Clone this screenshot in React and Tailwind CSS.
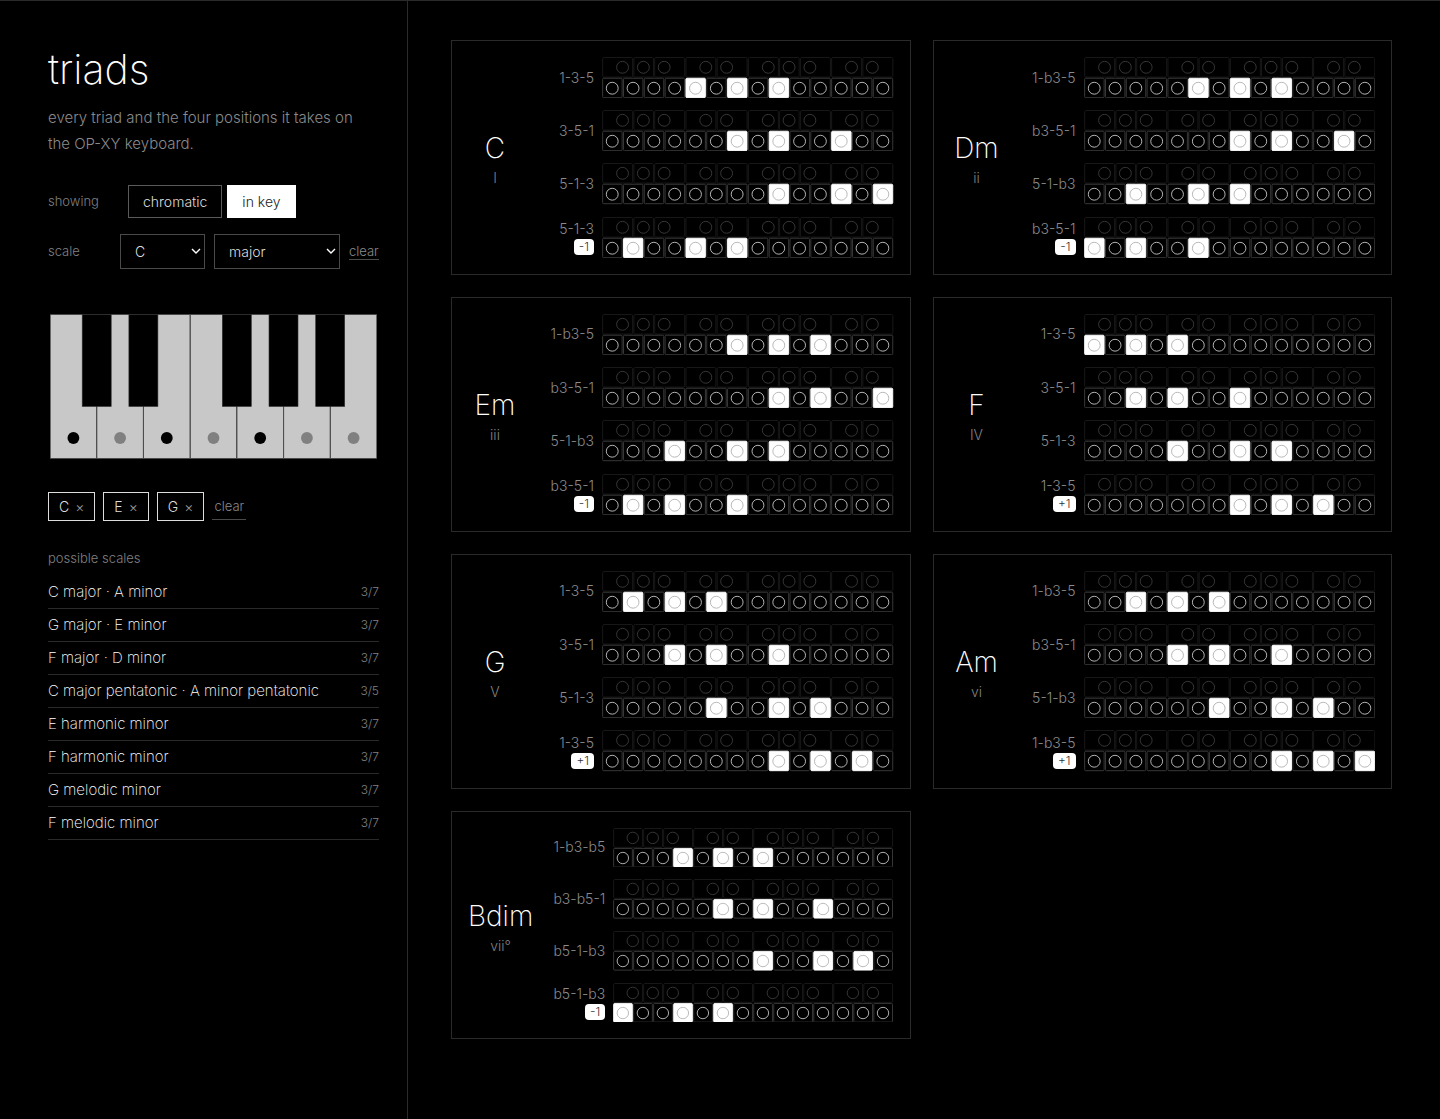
import React, { useState } from "react";

const CHORDS = [
  { name: "C", numeral: "I", rows: [["1-3-5", [4, 6, 8]], ["3-5-1", [6, 8, 11]], ["5-1-3", [8, 11, 13]], ["5-1-3", [1, 4, 6], "-1"]] },
  { name: "Dm", numeral: "ii", rows: [["1-b3-5", [5, 7, 9]], ["b3-5-1", [7, 9, 12]], ["5-1-b3", [2, 5, 7]], ["b3-5-1", [0, 2, 5], "-1"]] },
  { name: "Em", numeral: "iii", rows: [["1-b3-5", [6, 8, 10]], ["b3-5-1", [8, 10, 13]], ["5-1-b3", [3, 6, 8]], ["b3-5-1", [1, 3, 6], "-1"]] },
  { name: "F", numeral: "IV", rows: [["1-3-5", [0, 2, 4]], ["3-5-1", [2, 4, 7]], ["5-1-3", [4, 7, 9]], ["1-3-5", [7, 9, 11], "+1"]] },
  { name: "G", numeral: "V", rows: [["1-3-5", [1, 3, 5]], ["3-5-1", [3, 5, 8]], ["5-1-3", [5, 8, 10]], ["1-3-5", [8, 10, 12], "+1"]] },
  { name: "Am", numeral: "vi", rows: [["1-b3-5", [2, 4, 6]], ["b3-5-1", [4, 6, 9]], ["5-1-b3", [6, 9, 11]], ["1-b3-5", [9, 11, 13], "+1"]] },
  { name: "Bdim", numeral: "vii°", rows: [["1-b3-b5", [3, 5, 7]], ["b3-b5-1", [5, 7, 10]], ["b5-1-b3", [7, 10, 12]], ["b5-1-b3", [0, 3, 5], "-1"]] },
];

const SCALES = [
  ["C major · A minor", "3/7"],
  ["G major · E minor", "3/7"],
  ["F major · D minor", "3/7"],
  ["C major pentatonic · A minor pentatonic", "3/5"],
  ["E harmonic minor", "3/7"],
  ["F harmonic minor", "3/7"],
  ["G melodic minor", "3/7"],
  ["F melodic minor", "3/7"],
];

// Upper keys: left edge, right edge and circle centre, in white-key widths
const UPPER = [
  [0, 1.5, 1], [1.5, 2.5, 2], [2.5, 4, 3],
  [4, 5.5, 5], [5.5, 7, 6],
  [7, 8.5, 8], [8.5, 9.5, 9], [9.5, 11, 10],
  [11, 12.5, 12], [12.5, 14, 13],
];

function Keyboard({ active }) {
  return (
    <svg viewBox="0 0 280 39.6" className="block w-full" aria-hidden="true">
      {UPPER.map(([a, b, c]) => (
        <g key={c} fill="none">
          <rect x={a * 20 + 0.6} y="0.5" width={(b - a) * 20 - 1.2} height="18.8" rx="1.2" stroke="#1a1a1a" strokeWidth="0.9" />
          <circle cx={c * 20 - 0.3} cy="9.9" r="5.7" stroke="#3a3a3a" strokeWidth="0.9" />
        </g>
      ))}
      {Array.from({ length: 14 }, (_, i) => {
        const on = active.includes(i);
        return (
          <g key={i}>
            <rect x={i * 20 + 0.6} y="20.4" width="18.7" height="18.7" rx="1" fill={on ? "#fff" : "#000"} stroke={on ? "#fff" : "#3c3c3c"} strokeWidth="0.9" />
            <circle cx={i * 20 + 9.8} cy="30" r="5.7" fill="none" stroke={on ? "#b4b4b4" : "#c0c0c0"} strokeWidth="0.9" />
          </g>
        );
      })}
    </svg>
  );
}

function ChordCard({ chord }) {
  return (
    <article className="flex items-center gap-5 border border-[#2a2a2a] p-4">
      <div className="min-w-[54px] pt-1 text-center">
        <h2 className="text-[28px] leading-9 font-extralight text-white">{chord.name}</h2>
        <p className="mt-0.5 text-sm leading-5 text-[#808080]">{chord.numeral}</p>
      </div>
      <div className="flex min-w-0 flex-1 flex-col gap-3">
        {chord.rows.map(([label, active, shift], i) => (
          <div key={i} className="flex items-center gap-2">
            <div className="flex w-[52px] shrink-0 flex-col items-end text-sm leading-5 whitespace-nowrap text-[#8a8a8a]">
              <span>{label}</span>
              {shift && <span className="rounded bg-white px-[5px] text-xs leading-4 text-[#333]">{shift}</span>}
            </div>
            <div className="min-w-0 flex-1">
              <Keyboard active={active} />
            </div>
          </div>
        ))}
      </div>
    </article>
  );
}

const BLACK_AT = [1, 2, 4, 5, 6];
const CHOSEN = [0, 2, 4];

function Piano() {
  return (
    <svg viewBox="0 0 327 145" className="block w-full" role="img" aria-label="piano octave">
      {Array.from({ length: 7 }, (_, i) => (
        <g key={i}>
          <rect x={i * 46.7 + 0.2} y="0.5" width="46.4" height="144" fill="#c8c8c8" stroke="#444" strokeWidth="0.8" />
          <circle cx={i * 46.7 + 23.4} cy="124" r="5.9" fill={CHOSEN.includes(i) ? "#000" : "#808080"} />
        </g>
      ))}
      {BLACK_AT.map((n) => (
        <rect key={n} x={n * 46.7 - 14.5} y="0.5" width="29" height="92" fill="#000" stroke="#333" strokeWidth="0.6" />
      ))}
    </svg>
  );
}

function Select({ label, options, value, onChange, className }) {
  return (
    <div className={"relative " + className}>
      <select
        aria-label={label}
        value={value}
        onChange={(e) => onChange(e.target.value)}
        className="h-[35px] w-full appearance-none border border-[#4a4a4a] bg-black pr-6 pl-3.5 text-sm font-light text-[#ddd]"
      >
        {options.map((o) => <option key={o}>{o}</option>)}
      </select>
      <svg viewBox="0 0 10 6" className="pointer-events-none absolute top-3.5 right-1 h-1.5 w-2.5" aria-hidden="true">
        <path d="M1 1 L5 5 L9 1" fill="none" stroke="#fff" strokeWidth="1.4" />
      </svg>
    </div>
  );
}

export default function App() {
  const [root, setRoot] = useState("C");
  const [mode, setMode] = useState("major");
  return (
    <div className="flex min-h-screen border-t border-[#2a2a2a] bg-black font-['Inter',sans-serif] font-light text-[#ddd]">
      <aside className="w-[408px] shrink-0 border-r border-[#2a2a2a] pt-10 pr-7 pl-12">
        <h1 className="text-[41px] leading-[56px] font-extralight text-white">triads</h1>
        <p className="mt-2 text-[15px] leading-[26px] text-[#8a8a8a]">every triad and the four positions it takes on the OP-XY keyboard.</p>

        <div className="mt-7 flex items-center">
          <span className="w-20 text-[13px] text-[#808080]">showing</span>
          <div className="flex gap-[5px]">
            <button className="h-[33px] border border-[#5a5a5a] px-3.5 text-sm text-[#ddd]">chromatic</button>
            <button className="h-[33px] border border-white bg-white px-3.5 text-sm text-[#222]">in key</button>
          </div>
        </div>

        <div className="mt-4 flex items-center">
          <span className="w-[72px] text-[13px] text-[#808080]">scale</span>
          <Select label="scale root" options={["C", "D", "E", "F", "G", "A", "B"]} value={root} onChange={setRoot} className="w-[85px]" />
          <Select label="scale type" options={["major", "minor"]} value={mode} onChange={setMode} className="ml-[9px] w-[126px]" />
          <button className="ml-[9px] border-b border-[#4a4a4a] text-[13px] leading-4 text-[#8a8a8a]">clear</button>
        </div>

        <div className="mt-[45px] px-0.5">
          <Piano />
        </div>

        <div className="mt-[33px] flex items-center gap-2">
          {["C", "E", "G"].map((n) => (
            <button key={n} className="flex h-[29px] items-center gap-1.5 border border-[#ddd] px-2.5 text-sm text-[#ddd]">
              {n}
              <span className="text-[#999]">×</span>
            </button>
          ))}
          <button className="h-[27px] border-b border-[#4a4a4a] px-0.5 pt-0.5 text-[13px] text-[#8a8a8a]">clear</button>
        </div>

        <h2 className="mt-[27px] text-[13px] leading-5 text-[#808080]">possible scales</h2>
        <ul className="mt-2">
          {SCALES.map(([name, hits]) => (
            <li key={name} className="flex h-[33px] items-center justify-between border-b border-[#2a2a2a]">
              <span className="text-[15px] font-extralight text-white">{name}</span>
              <span className="text-xs text-[#808080]">{hits}</span>
            </li>
          ))}
        </ul>
      </aside>

      <main className="grid flex-1 grid-cols-2 content-start items-start gap-[22px] pt-[39px] pr-12 pb-12 pl-[43px]">
        {CHORDS.map((c) => <ChordCard key={c.name} chord={c} />)}
      </main>
    </div>
  );
}
